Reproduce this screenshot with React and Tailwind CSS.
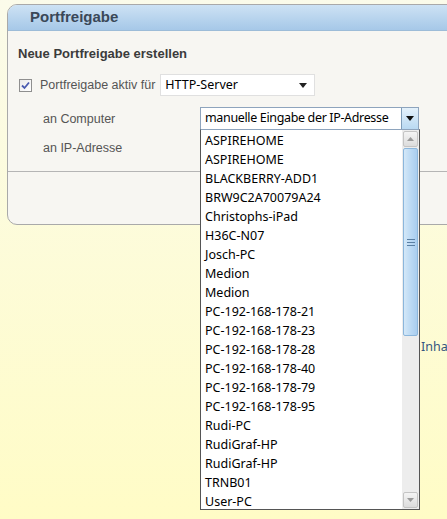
import React from "react";

const items = [
  "ASPIREHOME",
  "ASPIREHOME",
  "BLACKBERRY-ADD1",
  "BRW9C2A70079A24",
  "Christophs-iPad",
  "H36C-N07",
  "Josch-PC",
  "Medion",
  "Medion",
  "PC-192-168-178-21",
  "PC-192-168-178-23",
  "PC-192-168-178-28",
  "PC-192-168-178-40",
  "PC-192-168-178-79",
  "PC-192-168-178-95",
  "Rudi-PC",
  "RudiGraf-HP",
  "RudiGraf-HP",
  "TRNB01",
  "User-PC",
];

const seg = { fontFamily: '"Noto Sans", "Open Sans", sans-serif' };
const arial = { fontFamily: '"Liberation Sans", Arial, sans-serif' };

export default function App() {
  return (
    <div className="relative w-[447px] h-[519px] overflow-hidden bg-gradient-to-b from-[#fbfbea] to-[#fffcc6]">
      <div className="pt-[4px] pl-[7px]">
        <div
          className="w-[460px] h-[221px] rounded-l-[10px] border border-[#a9a9a9] bg-[#f7f6f2] overflow-hidden flex flex-col"
          style={arial}
        >
          <div className="h-[26px] shrink-0 bg-gradient-to-b from-[#cde2f4] to-[#a6c8e8] border-b border-[#9dbcd8] flex items-center pl-[22px]">
            <span className="text-[15px] font-bold text-[#3a4858]">Portfreigabe</span>
          </div>
          <div className="h-[141px] shrink-0 border-b border-[#b5b5b5] pl-[10px]">
            <div className="pt-[15px] text-[13px] font-bold text-[#3b3b3b] leading-[16px]">
              Neue Portfreigabe erstellen
            </div>
            <div className="mt-[12px] flex items-center h-[22px]">
              <div className="w-[13px] h-[13px] ml-[1px] border border-[#8f8f8f] bg-gradient-to-br from-[#eaeaea] to-white flex items-center justify-center">
                <svg width="9" height="9" viewBox="0 0 9 9">
                  <path d="M1 4.5 L3.5 7 L8 1.5" fill="none" stroke="#4a5bb0" strokeWidth="1.8" />
                </svg>
              </div>
              <span className="ml-[8px] text-[12.5px] text-[#555]">Portfreigabe aktiv für</span>
              <div className="ml-[5px] w-[155px] h-[22px] bg-white border border-[#e0e0e0] flex items-center justify-between pl-[4px] pr-[7px]" style={seg}>
                <span className="text-[12.5px] text-black">HTTP-Server</span>
                <svg width="8" height="5" viewBox="0 0 8 5">
                  <path d="M0 0 H8 L4 5 Z" fill="#222" />
                </svg>
              </div>
            </div>
            <div className="mt-[12px] flex items-center h-[22px]">
              <span className="ml-[25px] text-[12.5px] text-[#555] w-[156px]">an Computer</span>
            </div>
            <div className="mt-[10px] flex items-center h-[16px]">
              <span className="ml-[25px] text-[12.5px] text-[#555]">an IP-Adresse</span>
            </div>
          </div>
          <div className="flex-1" />
        </div>
      </div>

      {/* select: an Computer */}
      <div
        className="absolute left-[200px] top-[107px] w-[219px] h-[23px] bg-white border border-[#8ea4bd] flex items-center"
        style={seg}
      >
        <span className="pl-[4px] text-[12.5px] tracking-[-0.35px] text-black flex-1 leading-none whitespace-nowrap">manuelle Eingabe der IP-Adresse</span>
        <div className="w-[17px] h-full shrink-0 border-l border-[#7f9db9] bg-gradient-to-b from-[#e4f1fb] to-[#b9d9f2] flex items-center justify-center">
          <svg width="8" height="5" viewBox="0 0 8 5">
            <path d="M0 0 H8 L4 5 Z" fill="#111" />
          </svg>
        </div>
      </div>

      {/* dropdown list */}
      <div
        className="absolute left-[200px] top-[129px] w-[220px] h-[381px] bg-white border border-[#555] border-t-[#8ea4bd] flex"
        style={seg}
      >
        <div className="flex-1 flex flex-col pt-[1px]">
          {items.map((t, i) => (
            <div key={i} className="h-[19px] pl-[4px] text-[12.5px] leading-[19px] text-black whitespace-nowrap">
              {t}
            </div>
          ))}
        </div>
        <div className="w-[17px] h-full bg-[#ededed] flex flex-col p-[1px]">
          <div className="h-[16px] rounded-[2px] border border-[#c4c4c4] bg-gradient-to-b from-[#f4f4f4] to-[#dcdcdc] flex items-center justify-center">
            <svg width="7" height="4" viewBox="0 0 7 4">
              <path d="M0 4 H7 L3.5 0 Z" fill="#9a9a9a" />
            </svg>
          </div>
          <div className="mt-[1px] h-[188px] rounded-[2px] border border-[#8bb6dc] bg-gradient-to-r from-[#d4e8f8] via-[#bcdaf4] to-[#a9cdef] flex items-center justify-center">
            <svg width="8" height="7" viewBox="0 0 8 7">
              <path d="M0 0.5 H8 M0 3.5 H8 M0 6.5 H8" stroke="#5a7fa3" strokeWidth="1" />
            </svg>
          </div>
          <div className="flex-1" />
          <div className="h-[16px] rounded-[2px] border border-[#c4c4c4] bg-gradient-to-b from-[#f4f4f4] to-[#dcdcdc] flex items-center justify-center">
            <svg width="7" height="4" viewBox="0 0 7 4">
              <path d="M0 0 H7 L3.5 4 Z" fill="#9a9a9a" />
            </svg>
          </div>
        </div>
      </div>

      <span className="absolute left-[421px] top-[338px] text-[12.5px] text-[#35557f] whitespace-nowrap" style={seg}>
        Inhal
      </span>
    </div>
  );
}
